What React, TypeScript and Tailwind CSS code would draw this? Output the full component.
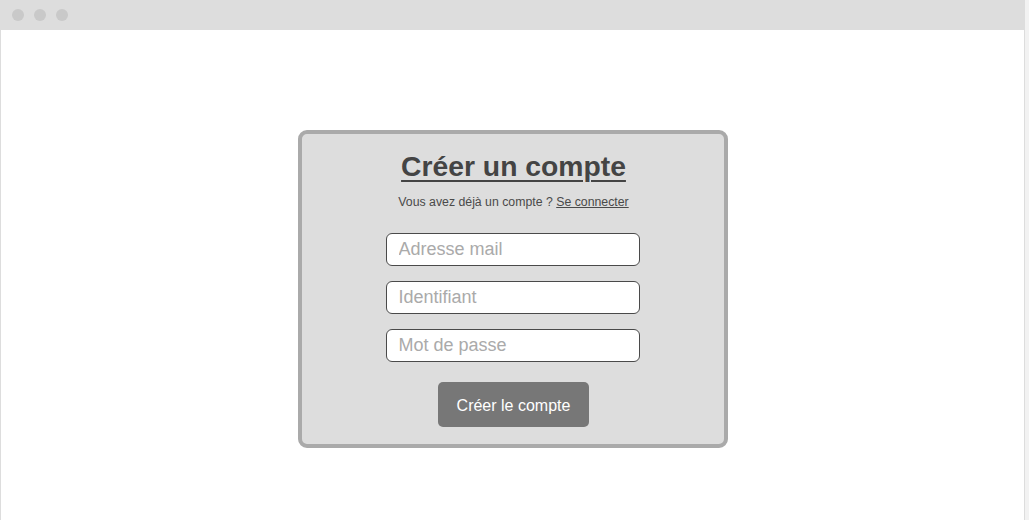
import { useState } from 'react';

const Field = ({ placeholder, type = 'text' }: { placeholder: string; type?: string }) => {
  const [value, setValue] = useState('');
  return (
    <input
      type={type}
      value={value}
      onChange={(e) => setValue(e.target.value)}
      placeholder={placeholder}
      className="h-[33px] w-[254px] rounded-[6px] border border-[#4a4a4a] bg-white px-[12px] text-[18px] text-[#333] placeholder:text-[#aaaaaa] outline-none"
    />
  );
};

export default function App() {
  return (
    <div className="flex h-[520px] w-full bg-[#f2f2f2] font-['Liberation_Sans',Arial,sans-serif]">
      <div className="flex h-full w-[1025px] flex-col">
        <div className="flex h-[30px] items-center gap-[10px] bg-[#dddddd] pl-[12px]">
          <span className="h-[12px] w-[12px] rounded-full bg-[#c9c9c9]" />
          <span className="h-[12px] w-[12px] rounded-full bg-[#c9c9c9]" />
          <span className="h-[12px] w-[12px] rounded-full bg-[#c9c9c9]" />
        </div>
        <div className="flex flex-1 justify-center border-x border-[#dddddd] bg-white pt-[100px]">
          <div className="flex h-[318px] w-[430px] flex-col items-center rounded-[9px] border-4 border-[#aaaaaa] bg-[#dddddd] pt-[16px]">
            <h1 className="pl-[2px] text-[28.3px] font-bold leading-[32px] text-[#444444] underline decoration-2 underline-offset-[4px]">
              Créer un compte
            </h1>
            <p className="mt-[12px] pl-[2px] text-[12.3px] leading-[16px] text-[#4a4a4a]">
              Vous avez déjà un compte ?{' '}
              <a href="#" className="underline">
                Se connecter
              </a>
            </p>
            <form className="mt-[23px] flex flex-col items-center gap-[15px]" onSubmit={(e) => e.preventDefault()}>
              <Field placeholder="Adresse mail" type="email" />
              <Field placeholder="Identifiant" />
              <Field placeholder="Mot de passe" type="password" />
              <button
                type="submit"
                className="mt-[5px] ml-[2px] h-[45px] w-[151px] rounded-[5px] bg-[#777777] pt-[2px] text-[16px] text-white">
                Créer le compte
              </button>
            </form>
          </div>
        </div>
      </div>
    </div>
  );
}
